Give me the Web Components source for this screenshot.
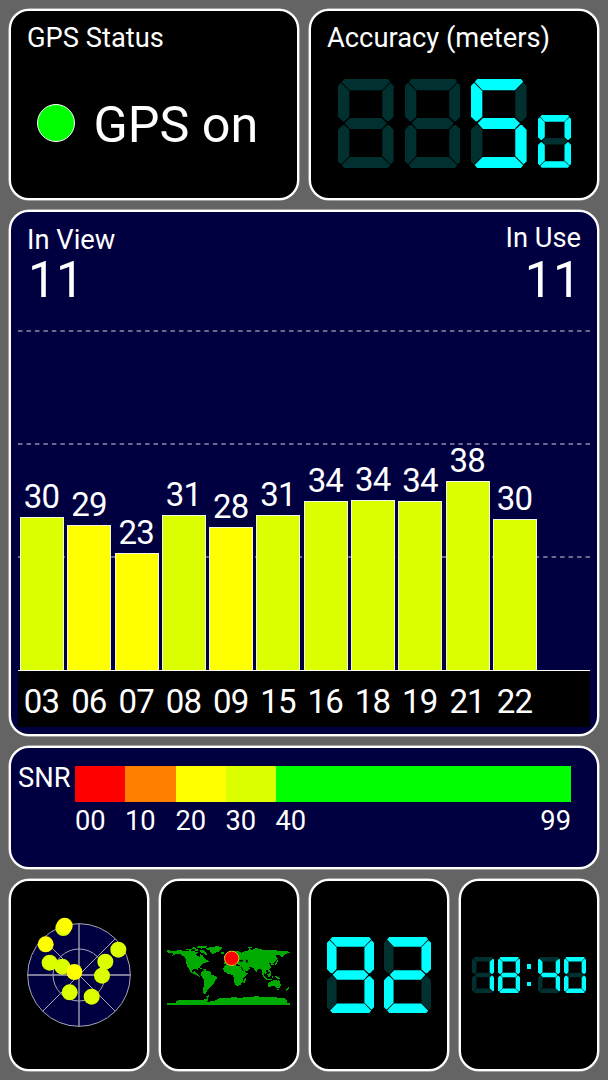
<!DOCTYPE html>
<html lang="en">
<head>
<meta charset="utf-8">
<title>GPS Status</title>
<style>
    html{
        background:#646464;
    }
    body{
        margin:0;
        font-family:Roboto, "Liberation Sans", sans-serif;
        color:white;
    }
</style>
</head>
<body>
<gps-dashboard></gps-dashboard>

<script>
// rounded panel used by every block of the dashboard
class GpsCard extends HTMLElement{
    constructor(){
        super()
    }
    connectedCallback(){
        this.attachShadow({ mode: "open" });
        this.shadowRoot.innerHTML=`
            <style>
            :host{
                display:flex;
                flex-direction:column;
                box-sizing:border-box;
                min-width:0;
                border:2px solid white;
                border-radius:20px;
                background:black;
                box-shadow:0 0 0 0.5px #ddd;
            }
            :host([navy]){
                background:#000040;
            }
            :host([center]){
                align-items:center;
                justify-content:center;
            }
            .title{
                font-size:27.3px;
                line-height:27px;
                padding:14px 0 0 16px;
                white-space:nowrap;
            }
            </style>
            ${this.hasAttribute('heading') ? `<div class="title">${this.getAttribute('heading')}</div>` : ''}
            <slot></slot>
        `
    }
}
window.customElements.define("gps-card",GpsCard)


class StatusLight extends HTMLElement{
    connectedCallback(){
        this.attachShadow({ mode: "open" });
        this.shadowRoot.innerHTML=`
            <style>
            :host{
                display:flex;
                align-items:center;
                gap:19px;
                padding:48px 0 0 25.5px;
                font-size:50.3px;
                line-height:50px;
                white-space:nowrap;
            }
            .light{
                width:36px;
                height:36px;
                margin-top:-4px;
                border:1.4px solid white;
                border-radius:50%;
                background:#0f0;
            }
            </style>
            <div class="light"></div>
            <div><slot></slot></div>
        `
    }
}
window.customElements.define("status-light",StatusLight)


const SEGMENTS={
    a:'19,0 150,0 157,8 132,34 35,34 11,9',
    b:'158,11 167,20 167,113 153,127 148,127 133,113 133,36',
    c:'153,138 167,152 167,247 158,256 133,231 133,152 148,138',
    d:'11,258 35,234 132,234 157,259 150,267 19,267',
    e:'14,138 0,152 0,247 9,256 34,231 34,152 19,138',
    f:'9,11 0,20 0,113 14,127 19,127 34,113 34,36',
    g:'20,133 36,117 131,117 147,133 131,150 36,150'
}
const DIGITS={
    '0':'abcdef', '1':'bc', '2':'abged', '3':'abgcd', '4':'fgbc',
    '5':'afgcd', '6':'afgedc', '7':'abc', '8':'abcdefg', '9':'abcdfg', ' ':''
}

// one seven segment digit, unlit segments stay dimly visible
class SegDigit extends HTMLElement{
    connectedCallback(){
        const on=DIGITS[this.getAttribute('value') || ' ']
        let shapes=''
        for(const key in SEGMENTS){
            shapes+=`<polygon points="${SEGMENTS[key]}" fill="${on.includes(key) ? '#0ff' : '#003030'}"/>`
        }
        this.attachShadow({ mode: "open" });
        this.shadowRoot.innerHTML=`
            <style>
            :host{
                display:block;
                flex:none;
            }
            svg{
                display:block;
                width:100%;
                height:100%;
            }
            </style>
            <svg viewBox="0 0 167 267" preserveAspectRatio="none">${shapes}</svg>
        `
    }
}
window.customElements.define("seg-digit",SegDigit)


class SegDisplay extends HTMLElement{
    connectedCallback(){
        const digits=[...this.getAttribute('value')].map(ch=>{
            return ch==':' ? '<div class="colon"><i></i><i></i></div>' : `<seg-digit value="${ch}"></seg-digit>`
        }).join('')
        const small=this.hasAttribute('fraction') ? `<seg-digit class="small" value="${this.getAttribute('fraction')}"></seg-digit>` : ''
        this.attachShadow({ mode: "open" });
        this.shadowRoot.innerHTML=`
            <style>
            :host{
                display:flex;
                align-items:flex-end;
                gap:var(--seg-gap);
            }
            seg-digit{
                width:var(--seg-width);
                height:var(--seg-height);
            }
            .small{
                width:33.3px;
                height:52.7px;
            }
            .colon{
                display:flex;
                flex-direction:column;
                justify-content:space-between;
                height:22.3px;
                width:4.6px;
                margin:0 2.2px 6.8px;
            }
            i{
                height:4.6px;
                background:#0ff;
            }
            </style>
            ${digits}${small}
        `
    }
}
window.customElements.define("seg-display",SegDisplay)


class SatCount extends HTMLElement{
    connectedCallback(){
        this.attachShadow({ mode: "open" });
        this.shadowRoot.innerHTML=`
            <style>
            :host{
                display:block;
            }
            .label{
                font-size:27.3px;
                line-height:27px;
            }
            .count{
                font-size:50px;
                line-height:50px;
                margin-top:var(--count-gap, 1px);
                padding-left:1px;
            }
            </style>
            <div class="label">${this.getAttribute('label')}</div>
            <div class="count">${this.getAttribute('count')}</div>
        `
    }
}
window.customElements.define("sat-count",SatCount)


// satellites: id, snr, bar height in px
const SATS=[
    ['03',30,153], ['06',29,145], ['07',23,117], ['08',31,155], ['09',28,143], ['15',31,155],
    ['16',34,169], ['18',34,170], ['19',34,169], ['21',38,189], ['22',30,151]
]

class SnrChart extends HTMLElement{
    connectedCallback(){
        const bars=SATS.map(([id,snr,height])=>`
            <div class="sat">
                <div class="value">${snr}</div>
                <div class="bar" style="height:${height}px;background:${snr<30 ? '#ff0' : '#dcff00'}"></div>
            </div>`).join('')
        const ids=SATS.map(([id])=>`<div class="id">${id}</div>`).join('')
        const lines=[1,114,227].map(y=>`<line x1="0" x2="572" y1="${y}" y2="${y}"/>`).join('')
        this.attachShadow({ mode: "open" });
        this.shadowRoot.innerHTML=`
            <style>
            :host{
                display:block;
                width:572px;
                margin:auto auto 7px 7px;
                font-size:33px;
                letter-spacing:-0.8px;
            }
            .plot{
                position:relative;
                display:flex;
                align-items:flex-end;
                height:340px;
                padding-left:2px;
            }
            .grid{
                position:absolute;
                left:0;
                top:0;
                width:572px;
                height:340px;
            }
            line{
                stroke:#8c8ca4;
                stroke-width:1.5;
                stroke-dasharray:4.5 3.97;
            }
            .sat{
                position:relative;
                width:47.3px;
            }
            .value{
                width:43.2px;
                text-align:center;
                line-height:32px;
                padding-bottom:4px;
            }
            .bar{
                box-sizing:border-box;
                width:44px;
                border:1px solid #f4f4e4;
                border-bottom:none;
            }
            .ids{
                display:flex;
                height:56px;
                border-top:1px solid white;
                padding-left:2px;
                background:black;
            }
            .id{
                width:43.2px;
                margin-right:4.1px;
                padding-top:15px;
                line-height:32px;
                text-align:center;
            }
            </style>
            <div class="plot">
                <svg class="grid">${lines}</svg>
                ${bars}
            </div>
            <div class="ids">${ids}</div>
        `
    }
}
window.customElements.define("snr-chart",SnrChart)


class SnrScale extends HTMLElement{
    connectedCallback(){
        this.attachShadow({ mode: "open" });
        this.shadowRoot.innerHTML=`
            <style>
            :host{
                display:flex;
                padding:18px 0 0 7px;
                font-size:27.3px;
                line-height:27px;
            }
            .name{
                width:57px;
                margin-top:-1px;
            }
            .scale{
                display:grid;
                grid-template-columns:50px 50.5px 50px 50px 295.5px;
                grid-template-rows:36px 27px;
                row-gap:6px;
            }
            .last{
                display:flex;
                justify-content:space-between;
            }
            </style>
            <div class="name">SNR</div>
            <div class="scale">
                <div style="background:#f00"></div>
                <div style="background:#ff8000"></div>
                <div style="background:#ff0"></div>
                <div style="background:#dcff00"></div>
                <div style="background:#0f0"></div>
                <div>00</div>
                <div>10</div>
                <div>20</div>
                <div>30</div>
                <div class="last"><span>40</span><span>99</span></div>
            </div>
        `
    }
}
window.customElements.define("snr-scale",SnrScale)


class SkyRadar extends HTMLElement{
    connectedCallback(){
        const lime='#dcff00', yellow='#ff0'
        const dots=[
            [158,84,lime], [162,77,yellow], [105,133,yellow], [117,188,lime], [155,200,lime], [191,216,yellow],
            [323,149,lime], [284,185,lime], [274,227,lime], [177,277,lime], [243,290,lime]
        ].map(([x,y,color])=>`<circle cx="${x+2}" cy="${y}" r="24" fill="${color}"/>`).join('')
        this.attachShadow({ mode: "open" });
        this.shadowRoot.innerHTML=`
            <style>
            :host, svg{
                display:block;
                width:136px;
                height:150px;
            }
            </style>
            <svg viewBox="3 0 408 450">
                <g fill="none" stroke="#a6a6b6" stroke-width="3">
                    <circle cx="207" cy="225" r="154" fill="#000040"/>
                    <circle cx="207" cy="225" r="78"/>
                    <path d="M53 225H361M207 71V379" stroke-width="4"/>
                    <path d="M98 116L316 334M98 334L316 116"/>
                </g>
                ${dots}
            </svg>
        `
    }
}
window.customElements.define("sky-radar",SkyRadar)


class WorldMap extends HTMLElement{
    connectedCallback(){
        this.attachShadow({ mode: "open" });
        this.shadowRoot.innerHTML=`
            <style>
            :host, svg{
                display:block;
                width:136px;
                height:80px;
            }
            .land{
                fill:#0a0;
                shape-rendering:crispEdges;
            }
            </style>
            <svg viewBox="2 0 408 240">
                <g class="land">
                    <path d="M21 46H28L30 49 38 47 62 46 78 48 95 47 105 50 112 52 108 58 112 64 118 65 120 58 126 60 132 68 138 74 143 78 136 83 130 85 124 89 118 95 113 100 112 106 108 102 100 101 96 104 93 109 97 113 102 109 107 110 106 114 112 116 116 122 124 122 118 126 110 121 98 116 90 110 86 100 82 96 78 86 77 76 72 66 62 58 50 56 40 60 32 64 40 57 36 54 22 53Z"/>
                    <path d="M78 43L90 41 96 44 90 47 80 46ZM92 38L104 37 106 41 96 42ZM106 42L114 44 112 48 104 47ZM108 35L124 33 140 33 136 38 124 41 112 39ZM118 44L130 46 138 52 142 58 134 60 128 54 118 51Z"/>
                    <path d="M138 40L150 36 168 34 184 35 187 40 180 46 174 50 164 54 158 58 152 54 149 46 140 44Z"/>
                    <path d="M182 52H190V56H183ZM110 96L122 98 126 102 116 100ZM128 103H136V106H128ZM140 76L148 78 146 82 139 80Z"/>
                    <path d="M124 108L134 106 146 108 152 114 153 119 166 123 171 128 164 138 160 148 154 152 150 158 144 162 140 168 136 174 137 178 129 174 129 160 132 146 132 136 124 126 122 118Z"/>
                    <path d="M192 93L198 88 214 87 222 91 236 93 246 96 252 108 258 113 264 113 258 120 250 128 248 138 240 150 230 155 224 148 220 138 220 128 216 119 202 117 192 110 188 104Z"/>
                    <path d="M250 136L256 130 256 136 252 144 248 143ZM192 62L198 62 202 72 194 74Z"/>
                    <path d="M192 86L193 79 200 78 198 72 208 68 214 62 208 61 210 54 222 48 234 49 244 53 252 49 262 47 266 43 278 44 288 39 298 42 310 45 330 45 345 46 370 48 389 50 389 54 378 56 372 60 364 68 360 61 350 60 346 64 352 70 346 78 338 84 340 89 334 91 332 84 324 84 330 91 332 98 326 104 316 107 320 113 316 118 311 112 310 118 315 128 306 118 304 106 299 100 292 104 288 113 282 104 278 98 270 97 262 95 268 101 261 108 253 110 246 99 242 92 234 90 230 86 224 84 220 87 212 82 206 80 200 86Z"/>
                    <path d="M262 38L272 35 276 37 266 42ZM350 76L355 77 348 88 342 90ZM324 106H328V112H324ZM330 108L334 114 330 118ZM306 120L318 128 322 133 312 130ZM320 119L328 115 332 120 326 127ZM334 122H339V128H334ZM342 122L356 126 360 132 348 130ZM318 132L334 133V135H318Z"/>
                    <path d="M322 146L330 140 338 136 346 134 352 140 356 133 360 144 362 152 356 160 348 158 342 153 334 154 324 156ZM350 162H355V165H350ZM376 166L386 156 387 159 379 168Z"/>
                    <path d="M21 210V204H46L48 197 66 195 100 194 130 194 142 190 143 198 138 202 150 199 166 196 178 190 200 188 226 187 244 189 252 185 270 186 290 183 300 186 330 186 356 188 378 191 380 203 389 204V210ZM138 183L146 181 146 186 140 189Z"/>
                </g>
                <g fill="#000">
                    <path d="M236 76L246 74 250 79 238 80ZM256 74L262 75 262 84 257 82ZM240 94L246 99 250 107 247 107Z"/>
                </g>
                <circle cx="214" cy="70" r="21.5" fill="#f00" stroke="#e8c020" stroke-width="3"/>
            </svg>
        `
    }
}
window.customElements.define("world-map",WorldMap)


class GpsDashboard extends HTMLElement{
    connectedCallback(){
        this.attachShadow({ mode: "open" });
        this.shadowRoot.innerHTML=`
            <style>
            :host{
                display:grid;
                box-sizing:border-box;
                width:608px;
                height:1080px;
                padding:9px;
                grid-template-columns:repeat(4, 140px);
                grid-template-rows:191px 526px 123px 192px;
                gap:10px;
            }
            .half{
                grid-column:span 2;
            }
            .full{
                grid-column:span 4;
            }
            .counts{
                display:flex;
                justify-content:space-between;
                padding:15px 16px 0 16px;
            }
            .use{
                text-align:right;
                margin-top:-2px;
                --count-gap:3px;
            }
            .accuracy{
                padding:26.5px 0 0 27px;
                --seg-width:55.6px;
                --seg-height:89px;
                --seg-gap:11.1px;
            }
            .speed{
                --seg-width:47px;
                --seg-height:76px;
                --seg-gap:9.4px;
            }
            .clock{
                --seg-width:22.2px;
                --seg-height:36px;
                --seg-gap:4.3px;
            }
            </style>
            <gps-card class="half" heading="GPS Status">
                <status-light>GPS on</status-light>
            </gps-card>
            <gps-card class="half" heading="Accuracy (meters)">
                <seg-display class="accuracy" value="  5" fraction="0"></seg-display>
            </gps-card>
            <gps-card class="full" navy>
                <div class="counts">
                    <sat-count label="In View" count="11"></sat-count>
                    <sat-count class="use" label="In Use" count="11"></sat-count>
                </div>
                <snr-chart></snr-chart>
            </gps-card>
            <gps-card class="full" navy>
                <snr-scale></snr-scale>
            </gps-card>
            <gps-card center><sky-radar></sky-radar></gps-card>
            <gps-card center><world-map></world-map></gps-card>
            <gps-card center><seg-display class="speed" value="92"></seg-display></gps-card>
            <gps-card center><seg-display class="clock" value="18:40"></seg-display></gps-card>
        `
    }
}
window.customElements.define("gps-dashboard",GpsDashboard)
</script>
</body>
</html>
